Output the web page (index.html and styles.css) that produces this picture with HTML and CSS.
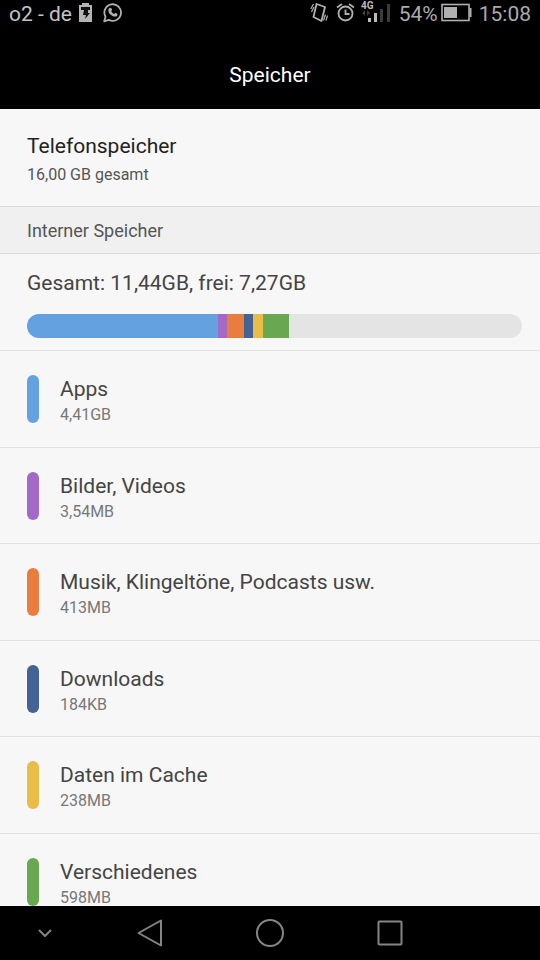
FILE: index.html
```html
<!DOCTYPE html>
<html lang="de">
<head>
<meta charset="utf-8">
<meta name="viewport" content="width=device-width, initial-scale=1">
<title>Speicher</title>
<link rel="stylesheet" href="styles.css">
</head>
<body>
<div class="status">
  <span class="carrier">o2 - de</span>
  <svg class="battery-note" width="13" height="22" viewBox="0 0 13 22"><path fill="#b4b4b4" d="M3 0h7v2h3v17H0V2h3z"/><path fill="#111" d="M2 4h9v3H2zM5 7h4v3h2l-5 6 1-4H4z"/></svg>
  <svg class="chat" width="20" height="22" viewBox="0 0 20 22"><path fill="none" stroke="#b0b0b0" stroke-width="1.800" stroke-linejoin="round" d="M1.200 18.300l1.300-4.600a8.300 8.300 0 1 1 3.300 3.200z"/><path fill="#b0b0b0" d="M7 4.700l1.200.2.900 2.100-.9 1.300c.7 1.300 1.700 2.200 3 2.800l1.100-1.300 2.200 1.100c.1 1.800-1 2.700-2.500 2.700-3.500-.4-6.400-3.200-6.700-6.200 0-1.200.7-2.300 1.700-2.700z"/></svg>
  <svg class="vibrate" width="18" height="22" viewBox="0 0 18 22"><g fill="none" stroke="#b0b0b0" stroke-width="1.800"><path stroke-linejoin="round" d="M6.500 1l8.500 3-3.500 14-8-4z"/><path stroke-width="1.200" d="M3.500 1L.8 6M4 4L1.500 9M13.500 17.500l2-6M16 17.500l1.500-5"/></g></svg>
  <svg class="alarm" width="19" height="22" viewBox="0 0 19 22"><g fill="none" stroke="#b0b0b0" stroke-width="1.800"><circle cx="9.500" cy="10.500" r="7"/><path d="M9.500 6.500v4.500h4M1 4.500l5-3.500M18 4.500l-5-3.500"/></g></svg>
  <svg class="signal" width="30" height="26" viewBox="0 0 30 26"><text class="network" x="0" y="8">4G</text><path fill="#3c3c3c" d="M1 12l3-3v6zM9 12l-3-3v6z"/><path fill="#bbb" d="M7 17h3v4H7zM13 12h3v9h-3z"/><path fill="#3c3c3c" d="M19 8h3v13h-3zM26 3h3v18h-3z"/></svg>
  <span class="percent">54%</span>
  <svg class="battery" width="31" height="22" viewBox="0 0 31 22"><rect x="1" y="1.500" width="27" height="16" fill="none" stroke="#b0b0b0" stroke-width="1.600"/><path fill="#b0b0b0" d="M3 4h13v11H3zM28.500 5h2v9h-2z"/></svg>
  <time class="clock">15:08</time>
</div>
<header class="titlebar"><h1>Speicher</h1></header>
<main class="content">
  <section class="device">
    <h2 class="label">Telefonspeicher</h2>
    <p class="detail">16,00 GB gesamt</p>
  </section>
  <h2 class="section">Interner Speicher</h2>
  <section class="summary">
    <p class="label">Gesamt: 11,44GB, frei: 7,27GB</p>
    <div class="usage">
      <span class="blue" style="flex-grow:191"></span>
      <span class="purple" style="flex-grow:9"></span>
      <span class="orange" style="flex-grow:17"></span>
      <span class="navy" style="flex-grow:9"></span>
      <span class="yellow" style="flex-grow:10"></span>
      <span class="green" style="flex-grow:26"></span>
      <span class="free" style="flex-grow:233"></span>
    </div>
  </section>
  <ul class="list">
    <li class="row"><span class="swatch blue"></span><div class="text"><h3 class="label">Apps</h3><p class="detail">4,41GB</p></div></li>
    <li class="row"><span class="swatch purple"></span><div class="text"><h3 class="label">Bilder, Videos</h3><p class="detail">3,54MB</p></div></li>
    <li class="row"><span class="swatch orange"></span><div class="text"><h3 class="label">Musik, Klingeltöne, Podcasts usw.</h3><p class="detail">413MB</p></div></li>
    <li class="row"><span class="swatch navy"></span><div class="text"><h3 class="label">Downloads</h3><p class="detail">184KB</p></div></li>
    <li class="row"><span class="swatch yellow"></span><div class="text"><h3 class="label">Daten im Cache</h3><p class="detail">238MB</p></div></li>
    <li class="row"><span class="swatch green"></span><div class="text"><h3 class="label">Verschiedenes</h3><p class="detail">598MB</p></div></li>
  </ul>
</main>
<nav class="navbar">
  <button type="button" aria-label="Leiste ausblenden"><svg width="30" height="30" viewBox="0 0 30 30"><path d="M9 12l6 6 6-6"/></svg></button>
  <button type="button" aria-label="Zurück"><svg width="30" height="30" viewBox="0 0 30 30"><path d="M3.500 15L26 2.500v25z"/></svg></button>
  <button type="button" aria-label="Startbildschirm"><svg width="30" height="30" viewBox="0 0 30 30"><circle cx="15" cy="15" r="13"/></svg></button>
  <button type="button" aria-label="Letzte Apps"><svg width="30" height="30" viewBox="0 0 30 30"><rect x="3.500" y="3.500" width="23" height="23" rx="1"/></svg></button>
</nav>
</body>
</html>
```
FILE: styles.css
```css
* {
  box-sizing: border-box;
  margin: 0;
  padding: 0;
}

body {
  display: flex;
  flex-direction: column;
  height: 100vh;
  overflow: hidden;
  background: #000;
  color: #444;
  font-family: Roboto, "Liberation Sans", sans-serif;
}

h1, h2, h3 {
  font-weight: 400;
}

.status {
  display: flex;
  flex: none;
  align-items: center;
  height: 28px;
  padding: 0 9px;
  color: #aaa;
  font-size: 21px;
  line-height: 28px;
}

.status svg {
  flex: none;
}

.carrier {
  color: #c4c4c4;
}

.battery-note {
  margin-left: 7px;
}

.chat {
  margin-left: 11px;
}

.vibrate {
  margin-left: auto;
}

.alarm {
  margin-left: 8px;
}

.signal {
  margin-left: 6px;
}

.network {
  fill: #bbb;
  font-size: 10px;
  font-weight: 700;
}

.percent {
  margin-left: 8px;
}

.battery {
  margin-left: 3px;
}

.clock {
  margin-left: 7px;
}

.titlebar {
  flex: none;
  height: 81px;
  padding-top: 33px;
  color: #fff;
  text-align: center;
}

.titlebar h1 {
  font-size: 21px;
  line-height: 28px;
}

.content {
  flex: 1;
  min-height: 0;
  overflow: hidden;
  background: #f7f7f7;
}

.label {
  font-size: 21px;
  line-height: 28px;
}

.detail {
  color: #777;
  font-size: 16px;
  line-height: 24px;
}

.device {
  height: 98px;
  padding: 23px 27px;
  border-bottom: 1px solid #dcdcdc;
}

.device .label {
  margin-bottom: 3px;
  color: #222;
}

.device .detail {
  color: #555;
}

.section {
  height: 47px;
  padding: 0 27px;
  border-bottom: 1px solid #dcdcdc;
  background: #f0f0f0;
  color: #555;
  font-size: 18px;
  line-height: 48px;
}

.summary {
  height: 97px;
  padding: 15px 18px 12px 27px;
  border-bottom: 1px solid #e0e0e0;
}

.usage {
  display: flex;
  height: 24px;
  margin-top: 17px;
  overflow: hidden;
  border-radius: 12px;
}

.list {
  list-style: none;
}

.row {
  display: flex;
  gap: 21px;
  align-items: center;
  height: 97px;
  padding: 0 27px;
  border-bottom: 1px solid #e0e0e0;
}

.row:nth-child(even) {
  height: 96px;
}

.text {
  padding-top: 4px;
}

.swatch {
  width: 12px;
  height: 48px;
  border-radius: 6px;
}

.blue { background: #64a1e0; }
.purple { background: #a468c8; }
.orange { background: #e87d3e; }
.navy { background: #456295; }
.yellow { background: #eabc48; }
.green { background: #67a850; }
.free { background: #e4e4e4; }

.navbar {
  display: grid;
  flex: none;
  grid-template-columns: 3fr 4fr 4fr 4fr 3fr;
  align-items: center;
  height: 54px;
}

.navbar button {
  display: flex;
  justify-content: center;
  border: 0;
  background: none;
}

.navbar svg {
  fill: none;
  stroke: #858585;
  stroke-width: 2;
  stroke-linejoin: round;
}
```
